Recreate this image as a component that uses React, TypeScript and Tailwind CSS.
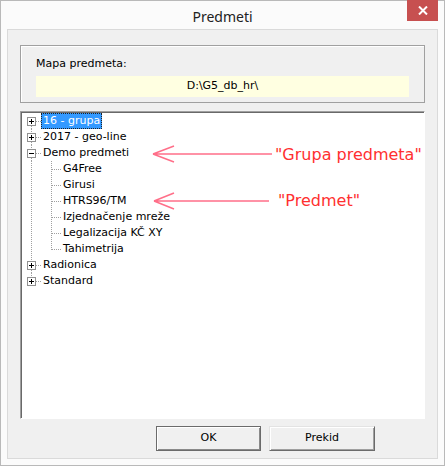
import React from 'react'

const DOT = '#a0a0a0'

type Node = {
  text: string
  level: 0 | 1
  expander?: 'plus' | 'minus'
  first?: boolean
  last?: boolean
  lastChild?: boolean
  selected?: boolean
}

const nodes: Node[] = [
  { text: '16 - grupa', level: 0, expander: 'plus', first: true, selected: true },
  { text: '2017 - geo-line', level: 0, expander: 'plus' },
  { text: 'Demo predmeti', level: 0, expander: 'minus' },
  { text: 'G4Free', level: 1 },
  { text: 'Girusi', level: 1 },
  { text: 'HTRS96/TM', level: 1 },
  { text: 'Izjednačenje mreže', level: 1 },
  { text: 'Legalizacija KČ XY', level: 1 },
  { text: 'Tahimetrija', level: 1, lastChild: true },
  { text: 'Radionica', level: 0, expander: 'plus' },
  { text: 'Standard', level: 0, expander: 'plus', last: true },
]

function Gutter({ node }: { node: Node }) {
  const w = node.level === 0 ? 20 : 40
  return (
    <svg width={w} height={16} shapeRendering="crispEdges" className="shrink-0">
      {node.level === 0 ? (
        <>
          {!node.first && <line x1={10.5} y1={0} x2={10.5} y2={4} stroke={DOT} strokeDasharray="1 1" />}
          {!node.last && <line x1={10.5} y1={13} x2={10.5} y2={16} stroke={DOT} strokeDasharray="1 1" />}
          <line x1={15} y1={8.5} x2={20} y2={8.5} stroke={DOT} strokeDasharray="1 1" />
          <rect x={6.5} y={4.5} width={8} height={8} fill="white" stroke="#919191" />
          <line x1={8} y1={8.5} x2={13} y2={8.5} stroke="#000" />
          {node.expander === 'plus' && <line x1={10.5} y1={6} x2={10.5} y2={11} stroke="#000" />}
        </>
      ) : (
        <>
          <line x1={10.5} y1={0} x2={10.5} y2={16} stroke={DOT} strokeDasharray="1 1" />
          <line x1={30.5} y1={0} x2={30.5} y2={node.lastChild ? 9 : 16} stroke={DOT} strokeDasharray="1 1" />
          <line x1={31} y1={8.5} x2={40} y2={8.5} stroke={DOT} strokeDasharray="1 1" />
        </>
      )}
    </svg>
  )
}

function TreeRow({ node }: { node: Node }) {
  return (
    <div className="flex h-[16px] items-center">
      <Gutter node={node} />
      <span
        className={
          node.selected
            ? 'h-[16px] bg-[#3399ff] px-[2px] leading-[16px] text-white outline-1 outline-dotted outline-offset-[-1px] outline-[#222]'
            : 'h-[16px] px-[2px] leading-[16px] text-black'
        }
      >
        {node.text}
      </span>
    </div>
  )
}

function WinButton({ label, isDefault }: { label: string; isDefault?: boolean }) {
  return (
    <button
      className={
        isDefault
          ? 'h-[25px] w-[105px] border border-[#6b6b6b] bg-[#f0f0f0] text-black shadow-[inset_1px_1px_0_#ffffff,inset_-1px_-1px_0_#8a8a8a]'
          : 'h-[25px] w-[106px] border border-t-[#e3e3e3] border-l-[#e3e3e3] border-r-[#6b6b6b] border-b-[#6b6b6b] bg-[#f0f0f0] text-black shadow-[inset_1px_1px_0_#ffffff,inset_-1px_-1px_0_#a0a0a0]'
      }
    >
      {label}
    </button>
  )
}

export default function App() {
  return (
    <div
      className="relative flex h-[466px] w-[445px] flex-col border border-[#b9b9b9] bg-[#fbfbfb] text-[11px]"
      style={{ fontFamily: '"DejaVu Sans", Tahoma, sans-serif' }}
    >
      {/* title bar */}
      <div className="relative flex h-[28px] shrink-0 items-center justify-center">
        <span className="mt-[2px] text-[14px] text-[#222]" style={{ fontFamily: '"Noto Sans", sans-serif' }}>
          Predmeti
        </span>
        <div className="absolute right-[6px] top-[-1px] flex h-[21px] w-[31px] items-center justify-center bg-[#c75050]">
          <svg width="10" height="9" viewBox="0 0 10 9">
            <path d="M1 0.5 L9 8.5 M9 0.5 L1 8.5" stroke="white" strokeWidth="2" />
          </svg>
        </div>
      </div>

      {/* client area */}
      <div className="mx-[6px] mb-[6px] flex flex-1 flex-col border border-[#dadada] bg-[#f0f0f0] px-[12px] pb-[6px] pt-[15px]">
        <div className="flex h-[58px] flex-col border border-[#a0a0a0] px-[15px] pt-[11px] shadow-[inset_1px_1px_0_#ffffff]">
          <span className="leading-[13px] text-black">Mapa predmeta:</span>
          <div className="mt-[6px] flex h-[21px] items-center justify-center bg-[#ffffe1] text-black">
            D:\G5_db_hr\
          </div>
        </div>

        <div className="mt-[8px] h-[308px] border border-t-[#a0a0a0] border-l-[#a0a0a0] border-r-[#ffffff] border-b-[#ffffff] bg-white pt-[1px] shadow-[inset_1px_1px_0_#696969]">
          {nodes.map((n) => (
            <TreeRow key={n.text} node={n} />
          ))}
        </div>

        <div className="mt-[7px] flex gap-[8px] pl-[136px]">
          <WinButton label="OK" isDefault />
          <WinButton label="Prekid" />
        </div>
      </div>

      {/* annotation overlay */}
      <svg className="pointer-events-none absolute left-[-1px] top-[-1px]" width="445" height="466">
        <g stroke="#ff6f89" strokeWidth="1.5" fill="none">
          <path d="M153 154 L272 154 M153 154 L174 146 M153 154 L174 162" />
          <path d="M154 201 L269 201 M154 201 L174 193 M154 201 L174 209" />
        </g>
      </svg>
      <span className="absolute left-[274px] top-[144px] text-[16px] leading-[20px] text-[#ff3030]">
        "Grupa predmeta"
      </span>
      <span className="absolute left-[277px] top-[190px] text-[16px] leading-[20px] text-[#ff3030]">
        "Predmet"
      </span>
    </div>
  )
}
